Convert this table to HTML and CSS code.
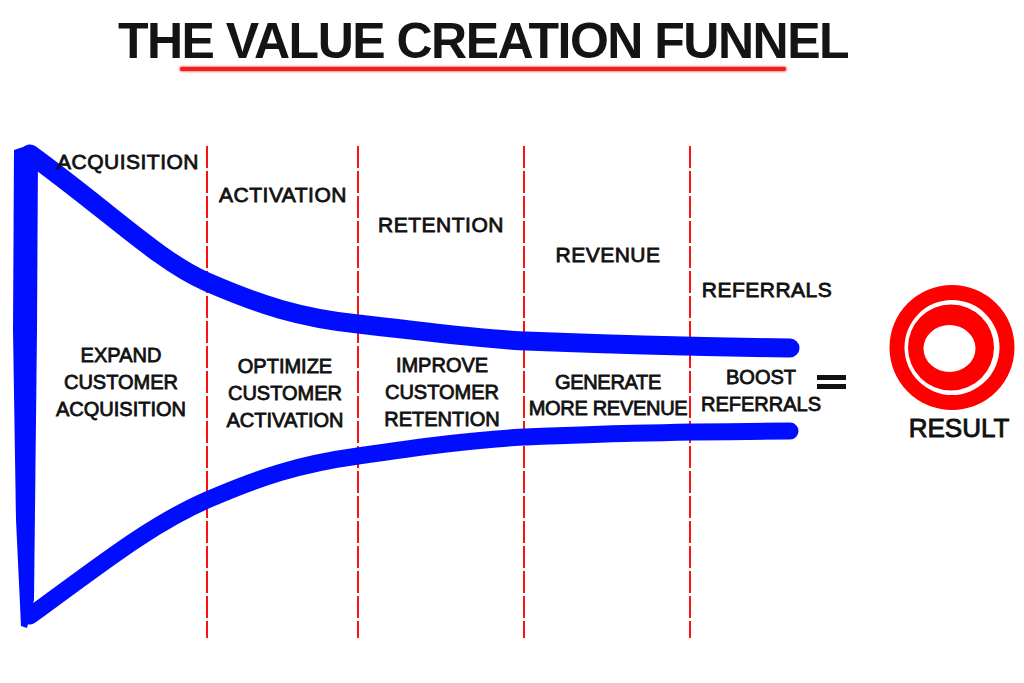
FILE: index.html
```html
<!DOCTYPE html>
<html lang="en">
<head>
<meta charset="utf-8">
<title>The Value Creation Funnel</title>
<link rel="stylesheet" href="styles.css">
</head>
<body>
<div class="page">
  <header class="header">
    <h1 class="title">THE VALUE CREATION FUNNEL</h1>
    <div class="underline"></div>
  </header>
  <main class="diagram">
    <svg class="funnel" width="1024" height="593" viewBox="0 90 1024 593" xmlns="http://www.w3.org/2000/svg">
      <defs>
        <filter id="soft" x="-5%" y="-5%" width="110%" height="110%">
          <feGaussianBlur stdDeviation="0.7"/>
        </filter>
      </defs>
      <g class="dividers">
        <line x1="207" y1="146" x2="207" y2="638"/>
        <line x1="358" y1="146" x2="358" y2="638"/>
        <line x1="524" y1="146" x2="524" y2="638"/>
        <line x1="690" y1="146" x2="690" y2="638"/>
      </g>
      <g class="blue" filter="url(#soft)">
        <path class="wall" d="M14,150 L26,146 L38,154 L37,330 L34,600 L27,628 L21,626 L16,520 L13,330 Z"/>
        <path class="curve top" d="M30,154 C110,212 160,262 207,282 C260,305 300,318 358,324 C430,332 470,338 524,341 C600,344 650,346 790,348"/>
        <path class="curve bottom" d="M30,616 C100,565 150,525 207,500 C260,477 300,464 358,456 C420,447 470,440 524,437 C600,434 650,432 790,431"/>
      </g>
      <g class="equals">
        <rect x="817" y="375" width="29" height="5"/>
        <rect x="817" y="384" width="29" height="5"/>
      </g>
      <g class="target">
        <circle cx="952" cy="347.5" r="62.5" class="red"/>
        <circle cx="952" cy="347.5" r="47.5" class="white"/>
        <circle cx="951" cy="347.5" r="43" class="red"/>
        <ellipse cx="949.5" cy="348.5" rx="26" ry="23.5" class="white"/>
      </g>
    </svg>

    <span class="label stage l-acq">ACQUISITION</span>
    <span class="label stage l-act">ACTIVATION</span>
    <span class="label stage l-ret">RETENTION</span>
    <span class="label stage l-rev">REVENUE</span>
    <span class="label stage l-ref">REFERRALS</span>

    <span class="label action a-acq">EXPAND<br>CUSTOMER<br>ACQUISITION</span>
    <span class="label action a-act">OPTIMIZE<br>CUSTOMER<br>ACTIVATION</span>
    <span class="label action a-ret">IMPROVE<br>CUSTOMER<br>RETENTION</span>
    <span class="label action a-rev">GENERATE<br>MORE REVENUE</span>
    <span class="label action a-ref">BOOST<br>REFERRALS</span>

    <span class="label result">RESULT</span>
  </main>
</div>
</body>
</html>
```

FILE: styles.css
```css
html, body {
  margin: 0;
  padding: 0;
  background: #ffffff;
}

.page {
  width: 1024px;
  height: 683px;
  overflow: hidden;
  font-family: "Liberation Sans", Arial, sans-serif;
  color: #111111;
}

.header {
  box-sizing: border-box;
  height: 90px;
  padding: 17px 58px 0 0;
  display: flex;
  flex-direction: column;
  align-items: center;
}

.title {
  margin: 0;
  font-size: 50px;
  line-height: 48px;
  font-weight: 700;
  letter-spacing: -1.5px;
  color: #141414;
  white-space: nowrap;
}

.underline {
  width: 606px;
  height: 4px;
  margin-top: 2px;
  background: #f21d1d;
  border-radius: 2px;
  box-shadow: 0 0 2px 1px rgba(242, 40, 40, 0.55);
}

.diagram {
  position: relative;
  width: 1024px;
  height: 593px;
}

.funnel {
  display: block;
}

.dividers line {
  stroke: #ff1010;
  stroke-width: 2;
  stroke-dasharray: 22 3;
}

.blue {
  fill: none;
}

.wall {
  fill: #0010ff;
}

.curve {
  fill: none;
  stroke: #0010ff;
  stroke-linecap: round;
  stroke-linejoin: round;
}

.curve.top {
  stroke-width: 19;
}

.curve.bottom {
  stroke-width: 17;
}

.equals rect {
  fill: #111111;
}

.target .red {
  fill: #ff0000;
}

.target .white {
  fill: #ffffff;
}

.label {
  position: absolute;
  width: 200px;
  text-align: center;
  white-space: nowrap;
  -webkit-text-stroke: 0.8px #111111;
}

.stage {
  font-size: 21px;
  line-height: 26px;
  letter-spacing: 0.5px;
}

.action {
  font-size: 20px;
  line-height: 27px;
}

.l-acq { left: 28px;  top: 59px; }
.l-act { left: 183px; top: 92px; }
.l-ret { left: 341px; top: 122px; }
.l-rev { left: 508px; top: 152px; }
.l-ref { left: 667px; top: 187px; }

.a-acq { left: 21px;  top: 252px; }
.a-act { left: 185px; top: 263px; }
.a-ret { left: 342px; top: 262px; }
.a-rev { left: 508px; top: 279px; line-height: 26px; letter-spacing: -0.3px; }
.a-ref { left: 661px; top: 274px; }

.result {
  left: 859px;
  top: 323px;
  font-size: 26px;
  line-height: 30px;
  -webkit-text-stroke: 0.9px #111111;
}
```
